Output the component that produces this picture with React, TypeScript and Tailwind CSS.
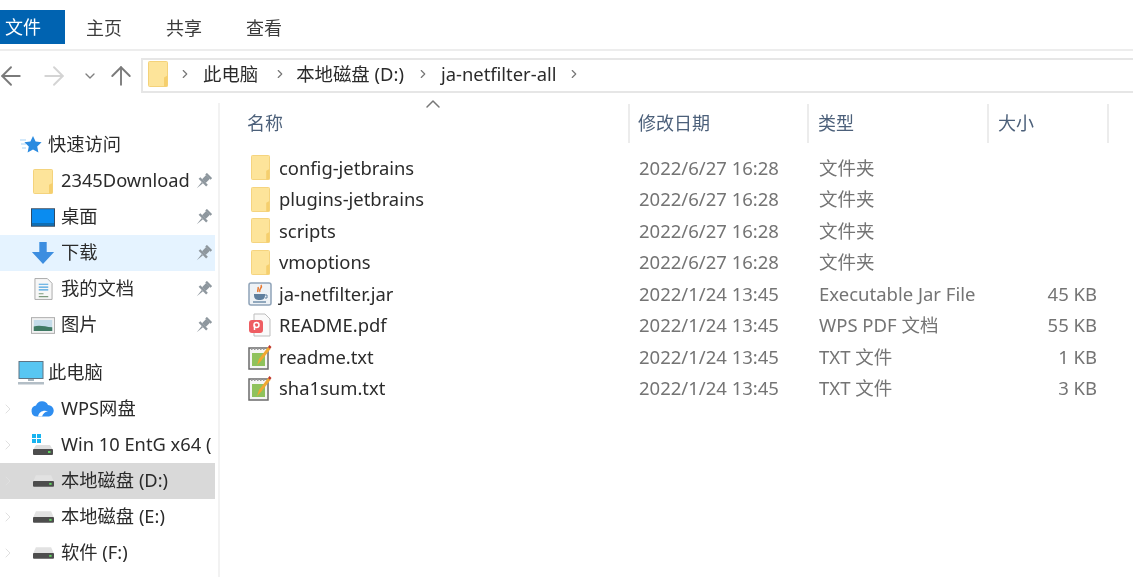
import { ArrowLeft, ArrowRight, ArrowUp, ChevronDown, ChevronRight, ChevronUp } from "lucide-react"
import type { ReactNode } from "react"

const font = { fontFamily: '"Noto Sans", "Noto Sans CJK SC", sans-serif' }

function FolderIcon({ className }: { className?: string }) {
  return (
    <svg viewBox="0 0 20 26" preserveAspectRatio="none" className={className}>
      <rect x="0.5" y="0.5" width="19" height="25" rx="1" fill="#fde49a" stroke="#f4d27a" />
      <path d="M16 25.5v-9l3.5-2v11z" fill="#f5cf6e" />
    </svg>
  )
}

function PinIcon() {
  return (
    <svg viewBox="0 0 16 16" className="h-[17px] w-[17px] shrink-0">
      <g transform="rotate(45 8 8)" fill="#8e979e">
        <rect x="4.5" y="0" width="7" height="2.2" />
        <rect x="5.5" y="2" width="5" height="5.5" />
        <rect x="3" y="7.2" width="10" height="2.3" />
        <path d="M7.2 9.5h1.6L8 17z" />
      </g>
    </svg>
  )
}

function DriveIcon() {
  return (
    <svg viewBox="0 0 22 14" className="h-[14px] w-[21px]">
      <path d="M3 1h16l3 7H0z" fill="#e2e2e2" />
      <rect x="0" y="7" width="22" height="6" rx="1" fill="#4d4d4d" />
      <rect x="17" y="9" width="2.5" height="2" fill="#5fd35f" />
    </svg>
  )
}

const sideIcons: Record<string, ReactNode> = {
  star: (
    <svg viewBox="0 0 22 20" className="h-5 w-[22px]">
      <path d="M0 5h6M1 9h5M2 13h4" stroke="#a5d2f5" strokeWidth="1.2" />
      <path d="M13 1l2.6 5.6 6 .7-4.4 4.2 1.2 6L13 14.6 7.6 17.5l1.2-6L4.4 7.3l6-.7z" fill="#2b8be0" />
    </svg>
  ),
  folder: <FolderIcon className="h-[25px] w-5" />,
  desktop: (
    <svg viewBox="0 0 26 20" className="h-[19px] w-6">
      <rect x="0" y="0" width="26" height="20" fill="#35475c" />
      <rect x="1" y="1" width="24" height="15" fill="#0a8cf0" />
      <rect x="1" y="16" width="24" height="3" fill="#0f6fb6" />
    </svg>
  ),
  download: (
    <svg viewBox="0 0 26 26" className="h-6 w-6">
      <path d="M9 1h8v11h8L13 25 1 12h8z" fill="#3d8ee0" />
    </svg>
  ),
  doc: (
    <svg viewBox="0 0 20 24" className="h-6 w-[19px]">
      <path d="M1 1h13l5 5v17H1z" fill="#f7f7f7" stroke="#a8a8a8" />
      <path d="M5 7h10M5 10h10M5 13h10" stroke="#4aa3df" strokeWidth="1.3" />
      <path d="M5 17h5M5 20h10" stroke="#7c9a7c" strokeWidth="1.3" />
    </svg>
  ),
  picture: (
    <svg viewBox="0 0 26 18" className="h-[19px] w-6">
      <rect x="0.5" y="0.5" width="25" height="17" fill="#f2f2f2" stroke="#a8a8a8" />
      <rect x="3" y="3" width="20" height="12" fill="#c4dcea" />
      <path d="M3 10c6-2 12 0 20 1v4H3z" fill="#3f7a64" />
    </svg>
  ),
  pc: (
    <svg viewBox="0 0 26 24" className="h-6 w-[26px]">
      <rect x="1" y="0.5" width="24" height="17" fill="#58c6f2" stroke="#5e7484" />
      <rect x="10" y="18" width="6" height="2" fill="#a9b6bf" />
      <rect x="0" y="21" width="26" height="2.5" fill="#b3bec6" />
    </svg>
  ),
  cloud: (
    <svg viewBox="0 0 24 16" className="h-4 w-6">
      <path d="M6 15.5a5.5 5.5 0 01-1-10.9A6.5 6.5 0 0117 4a5.8 5.8 0 011 11.5z" fill="#2f8ef0" />
      <path d="M7 15.5c1-5 6-7 10-5-3 0-5 2-6 5z" fill="#ffffff" />
    </svg>
  ),
  win: (
    <svg viewBox="0 0 24 24" className="h-6 w-6">
      <rect x="1" y="1" width="4" height="4" fill="#18b4f0" />
      <rect x="6" y="1" width="4" height="4" fill="#18b4f0" />
      <rect x="1" y="6" width="4" height="4" fill="#18b4f0" />
      <rect x="6" y="6" width="4" height="4" fill="#18b4f0" />
      <path d="M5 12h14l3 5H2z" fill="#dedede" />
      <rect x="2" y="16" width="20" height="6" rx="1" fill="#4d4d4d" />
      <rect x="17" y="18" width="2.5" height="2" fill="#5fd35f" />
    </svg>
  ),
  drive: <DriveIcon />,
}

type SideRow = {
  label: string
  icon: string
  depth?: 0 | 1
  pin?: boolean
  chevron?: boolean
  bg?: string
  gapAfter?: boolean
}

const sideRows: SideRow[] = [
  { label: "快速访问", icon: "star", depth: 0 },
  { label: "2345Download", icon: "folder", pin: true },
  { label: "桌面", icon: "desktop", pin: true },
  { label: "下载", icon: "download", pin: true, bg: "bg-[#e5f3ff]" },
  { label: "我的文档", icon: "doc", pin: true },
  { label: "图片", icon: "picture", pin: true, gapAfter: true },
  { label: "此电脑", icon: "pc", depth: 0 },
  { label: "WPS网盘", icon: "cloud", chevron: true },
  { label: "Win 10 EntG x64 (", icon: "win", chevron: true },
  { label: "本地磁盘 (D:)", icon: "drive", chevron: true, bg: "bg-[#d9d9d9]" },
  { label: "本地磁盘 (E:)", icon: "drive", chevron: true },
  { label: "软件 (F:)", icon: "drive", chevron: true },
]

function Sidebar() {
  return (
    <aside className="w-[220px] shrink-0 border-r-[2px] border-[#f2f2f2] pt-[24px]">
      {sideRows.map((row) => (
        <div key={row.label} className={row.gapAfter ? "mb-[12px]" : ""}>
          <div className={"flex h-[36px] w-[215px] items-center overflow-hidden " + (row.bg ?? "")}>
            <div className="flex w-[16px] shrink-0 justify-center">
              {row.chevron && <ChevronRight className="h-4 w-4 text-[#e0e0e0]" strokeWidth={1.5} />}
            </div>
            {row.depth === 0 ? (
              <div className="mr-[2px] flex w-[30px] shrink-0 justify-center">{sideIcons[row.icon]}</div>
            ) : (
              <div className="ml-[9px] flex w-[36px] shrink-0 justify-center">{sideIcons[row.icon]}</div>
            )}
            <span className="whitespace-nowrap pb-[2px] text-[18.3px] text-[#2b2b2b]">{row.label}</span>
            {row.pin && (
              <div className="ml-auto mr-[3px] flex shrink-0">
                <PinIcon />
              </div>
            )}
          </div>
        </div>
      ))}
    </aside>
  )
}

function JarIcon() {
  return (
    <svg viewBox="0 0 24 24" className="-ml-[3px] h-6 w-6">
      <rect x="1" y="1" width="22" height="22" rx="2" fill="#eef2f6" stroke="#8fa3b8" strokeWidth="1.5" />
      <path d="M13 3c2 3-3 4-1 7M10 5c1 2-1 3 0 5" stroke="#e8762c" strokeWidth="1.5" fill="none" />
      <path d="M6 12h11v1c0 4-2 5-5.5 5S6 17 6 13z" fill="#5f7f9e" />
      <path d="M17 13h2v3h-2" stroke="#5f7f9e" fill="none" />
      <path d="M5 20h13" stroke="#5f7f9e" strokeWidth="1.3" />
    </svg>
  )
}

function PdfIcon() {
  return (
    <svg viewBox="0 0 24 24" className="-ml-[3px] h-6 w-6">
      <path d="M6 1h11l5 5v17H6z" fill="#fafafa" stroke="#bdbdbd" />
      <rect x="1" y="7" width="14" height="13" rx="3" fill="#ee5d62" />
      <circle cx="8.5" cy="12" r="2.5" fill="none" stroke="#fff" strokeWidth="1.5" />
      <path d="M6.5 12v5" stroke="#fff" strokeWidth="1.5" />
    </svg>
  )
}

function TxtIcon() {
  return (
    <svg viewBox="0 0 24 26" className="-ml-[3px] h-[26px] w-6">
      <rect x="1" y="4" width="19" height="21" fill="#f5f5f5" stroke="#6b6b6b" strokeWidth="1.5" />
      <path d="M3 5h15" stroke="#9a9a9a" strokeDasharray="1.5 1.5" strokeWidth="2" />
      <rect x="4" y="9" width="13" height="13" fill="#8fc25c" />
      <path d="M9 21l2-6L20 3l2.5 2L13 17z" fill="#f0a830" />
      <path d="M20 3l1.5-2 2 2L22 5z" fill="#c0392b" />
    </svg>
  )
}

const files = [
  { name: "config-jetbrains", date: "2022/6/27 16:28", type: "文件夹", size: "", icon: "folder" },
  { name: "plugins-jetbrains", date: "2022/6/27 16:28", type: "文件夹", size: "", icon: "folder" },
  { name: "scripts", date: "2022/6/27 16:28", type: "文件夹", size: "", icon: "folder" },
  { name: "vmoptions", date: "2022/6/27 16:28", type: "文件夹", size: "", icon: "folder" },
  { name: "ja-netfilter.jar", date: "2022/1/24 13:45", type: "Executable Jar File", size: "45 KB", icon: "jar" },
  { name: "README.pdf", date: "2022/1/24 13:45", type: "WPS PDF 文档", size: "55 KB", icon: "pdf" },
  { name: "readme.txt", date: "2022/1/24 13:45", type: "TXT 文件", size: "1 KB", icon: "txt" },
  { name: "sha1sum.txt", date: "2022/1/24 13:45", type: "TXT 文件", size: "3 KB", icon: "txt" },
]

function fileIcon(kind: string) {
  if (kind === "folder") return <FolderIcon className="h-[25px] w-[19px]" />
  if (kind === "jar") return <JarIcon />
  if (kind === "pdf") return <PdfIcon />
  return <TxtIcon />
}

const columns = "grid grid-cols-[410px_179px_180px_120px]"

function FileList() {
  return (
    <section className="min-w-0 flex-1">
      <div className={columns + " relative mt-[1px] h-[39px] text-[18px] text-[#4c607a]"}>
        <ChevronUp className="absolute left-[201px] top-[-12px] h-6 w-6 text-[#777777]" strokeWidth={1.5} />
        <div className="flex items-center border-r-[2px] border-[#ececec] pl-[27px]">名称</div>
        <div className="flex items-center border-r-[2px] border-[#ececec] pl-[8px]">修改日期</div>
        <div className="flex items-center border-r-[2px] border-[#ececec] pl-[9px]">类型</div>
        <div className="flex items-center border-r-[2px] border-[#ececec] pl-[9px]">大小</div>
      </div>
      <div className="pt-[9px]">
        {files.map((f) => (
          <div key={f.name} className={columns + " h-[31.5px] items-center text-[18.5px] text-[#747474]"}>
            <div className="flex items-center pl-[31px] text-[18.4px] text-[#2b2b2b]">
              <div className="flex w-[28px] shrink-0 justify-start">{fileIcon(f.icon)}</div>
              <span className="whitespace-nowrap">{f.name}</span>
            </div>
            <div className="pl-[9px]">{f.date}</div>
            <div className="whitespace-nowrap pl-[10px]">{f.type}</div>
            <div className="pr-[12px] text-right">{f.size}</div>
          </div>
        ))}
      </div>
    </section>
  )
}

export default function App() {
  return (
    <div className="h-[577px] w-[1133px] overflow-hidden bg-white blur-[0.4px]" style={font}>
      <header className="flex h-[51px] border-b-[2px] border-[#ededed] text-[18px] text-[#3c3c3c]">
        <div className="mt-[10px] flex h-[34px] w-[65px] items-center bg-[#0063b1] pl-[5px] text-white">文件</div>
        <div className="flex w-[80px] items-center pl-[21px] pt-[8px]">主页</div>
        <div className="flex w-[80px] items-center pl-[21px] pt-[8px]">共享</div>
        <div className="flex w-[80px] items-center pl-[21px] pt-[8px]">查看</div>
      </header>
      <nav className="flex h-[52px] items-start pt-[7px]">
        <div className="flex h-[35px] w-[141px] shrink-0 items-center">
          <ArrowLeft className="-ml-[4px] h-[30px] w-[30px] shrink-0 text-[#7a7a7a]" strokeWidth={1.5} />
          <ArrowRight className="ml-[13px] h-[30px] w-[30px] shrink-0 text-[#d4d4d4]" strokeWidth={1.5} />
          <ChevronDown className="ml-[13px] h-4 w-4 shrink-0 text-[#808080]" strokeWidth={2} />
          <ArrowUp className="ml-[8px] h-[30px] w-[30px] shrink-0 text-[#7a7a7a]" strokeWidth={1.5} />
        </div>
        <div className="flex h-[35px] flex-1 items-center border-[2px] border-r-0 border-[#e6e6e6] pb-[3px] pl-[5px] text-[18.4px] text-[#2b2b2b]">
          <FolderIcon className="h-[26px] w-[20px]" />
          <ChevronRight className="ml-[10px] h-[14px] w-[14px] text-[#777777]" strokeWidth={2} />
          <span className="ml-[11px]">此电脑</span>
          <ChevronRight className="ml-[15px] h-[14px] w-[14px] text-[#777777]" strokeWidth={2} />
          <span className="ml-[9px]">本地磁盘 (D:)</span>
          <ChevronRight className="ml-[12px] h-[14px] w-[14px] text-[#777777]" strokeWidth={2} />
          <span className="ml-[11px]">ja-netfilter-all</span>
          <ChevronRight className="ml-[11px] h-[14px] w-[14px] text-[#777777]" strokeWidth={2} />
        </div>
      </nav>
      <main className="flex h-[474px]">
        <Sidebar />
        <FileList />
      </main>
    </div>
  )
}
